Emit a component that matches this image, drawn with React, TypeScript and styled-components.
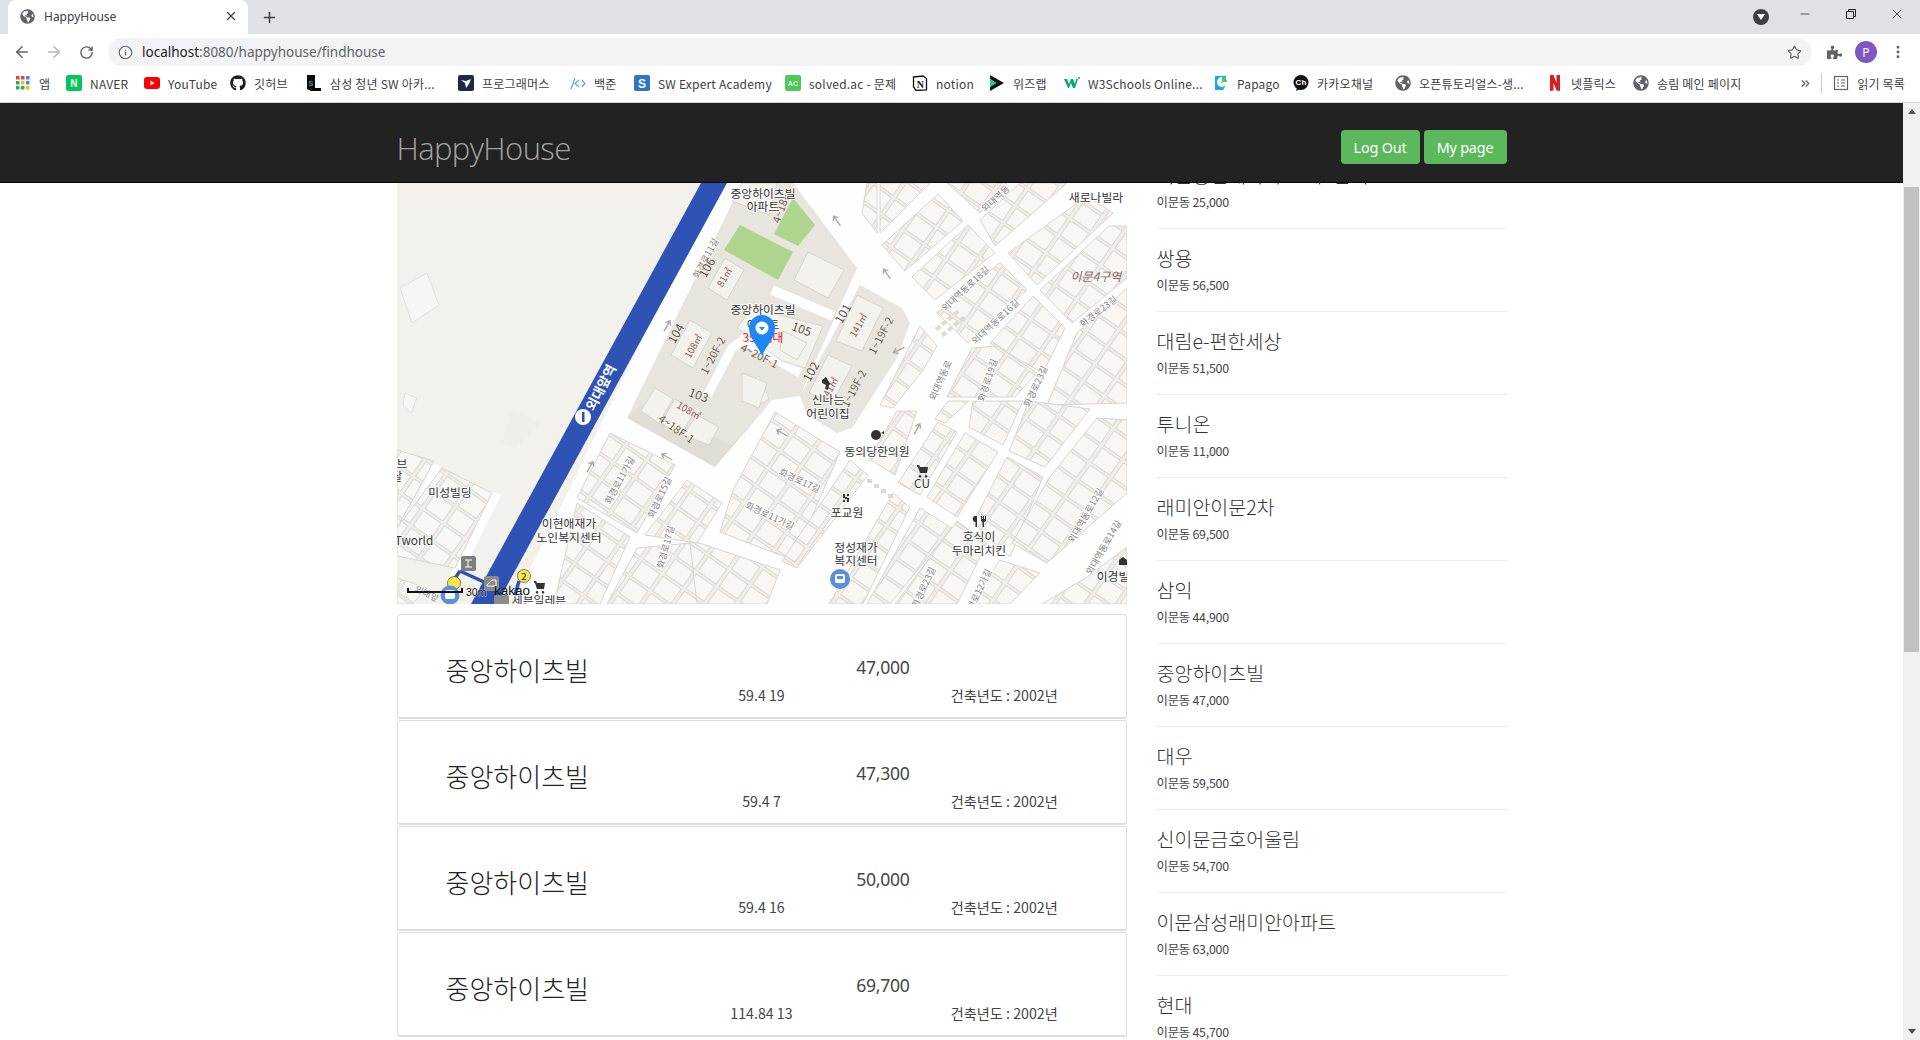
import React from "react";
import styled, { createGlobalStyle } from "styled-components";
import { ArrowLeft, ArrowRight, RotateCw, Info, Star, X, Plus, Minus, EllipsisVertical, ChevronsRight } from "lucide-react";
import { FaGithub, FaGlobeAmericas, FaPuzzlePiece } from "react-icons/fa";

const SANS = `"Noto Sans", "Noto Sans CJK KR", sans-serif`;
const KR = `"Noto Sans CJK KR", "Noto Sans", sans-serif`;

const Global = createGlobalStyle`
  html, body { margin: 0; padding: 0; height: 1040px; overflow: hidden; background: #fff; }
  * { box-sizing: border-box; }
`;

const Screen = styled.div`
  width: 1920px; height: 1040px; display: flex; flex-direction: column; font-family: ${SANS}; overflow: hidden;
`;
const TabStrip = styled.div`
  height: 34px; background: #dee1e6; display: flex; align-items: stretch; padding-left: 8px; flex: none;
`;
const Tab = styled.div`
  width: 240px; background: #fff; border-radius: 8px 8px 0 0; display: flex; align-items: center;
  padding: 0 10px 2px 12px; font-size: 12px; color: #3c4043;
  svg { flex: none; }
`;
const TabTitle = styled.span`
  margin-left: 9px; flex: 1;
`;
const NewTab = styled.div`
  width: 42px; display: flex; align-items: center; justify-content: center; color: #3c4043;
`;
const StripSpacer = styled.div`flex: 1;`;
const MediaDot = styled.div`
  width: 16px; height: 16px; border-radius: 50%; background: #3c4043; align-self: center; margin-right: 13px;
  display: flex; align-items: center; justify-content: center;
  &::after { content: ""; border: 4px solid transparent; border-top: 6px solid #fff; border-bottom: 0; }
`;
const WinButton = styled.div`
  width: 46px; display: flex; align-items: center; justify-content: center; color: #222; padding-bottom: 6px;
`;
const Toolbar = styled.div`
  height: 32px; background: #fff; display: flex; align-items: stretch; padding: 4px 6px 0; flex: none;
`;
const ToolIcon = styled.div<{ $dim?: boolean }>`
  width: 32px; display: flex; align-items: center; justify-content: center;
  color: ${(p) => (p.$dim ? "#b6b8bb" : "#5f6368")};
`;
const Address = styled.div`
  width: 1704px; margin: 0 6px; border-radius: 14px; background: #f1f3f4; display: flex; align-items: center;
  padding: 0 10px 0 10px; color: #5f6368; font-size: 13.5px;
`;
const Url = styled.span`
  margin-left: 9px; flex: 1;
  b { font-weight: 400; color: #202124; }
`;
const Avatar = styled.div`
  width: 22px; height: 22px; border-radius: 50%; background: #7e57c2; color: #fff; font-size: 12px;
  display: flex; align-items: center; justify-content: center;
`;
const Bookmarks = styled.div`
  height: 37px; background: #fff; border-bottom: 1px solid #d4d5d7; display: flex; align-items: center;
  padding: 0 0 2px 15px; flex: none; font-family: ${KR}; font-size: 12px; letter-spacing: 0.2px; color: #3c4043;
`;
const Mark = styled.div<{ $w: number }>`
  width: ${(p) => p.$w}px; flex: none; display: flex; align-items: center; gap: 8px; white-space: nowrap; overflow: hidden;
  svg { flex: none; }
`;
const BookmarkEnd = styled.div`
  margin-left: auto; display: flex; align-items: center; color: #5f6368;
`;
const Divider = styled.div`
  width: 1px; height: 20px; background: #c9cbce; margin: 0 11px 0 9px;
`;
const ReadingLabel = styled.span`
  margin: 0 15px 0 8px; color: #3c4043;
`;
const Viewport = styled.div`
  flex: 1; display: flex; min-height: 0;
`;
const Page = styled.div`
  flex: 1; position: relative; overflow: hidden; background: #fff;
`;
const Navbar = styled.nav`
  position: absolute; z-index: 5; top: 0; left: 0; right: 0; height: 80px; background: #222; border-bottom: 1px solid #080808;
  display: flex; justify-content: center;
`;
const NavInner = styled.div`
  width: 1110px; display: flex; justify-content: space-between; align-items: flex-start;
`;
const Brand = styled.div`
  font-family: "Open Sans", ${SANS}; font-weight: 300; font-size: 31px; line-height: 42px; margin-top: 24px; color: #a3a3a3; letter-spacing: -0.6px;
`;
const NavButtons = styled.div`
  display: flex; gap: 4px; margin-top: 27px;
`;
const GreenButton = styled.div<{ $w: number }>`
  width: ${(p) => p.$w}px; height: 34px; border-radius: 4px; background: #5cb85c; color: #fff; font-size: 14.4px;
  display: flex; align-items: center; justify-content: center; letter-spacing: -0.2px;
`;
const Container = styled.div`
  width: 1140px; margin: 0 auto; display: grid; grid-template-columns: 760px 380px;
`;
const MainColumn = styled.div`
  padding: 80px 15px 0;
`;
const MapFrame = styled.div`
  height: 421px; margin-bottom: 10px; overflow: hidden; background: #f3f1ec;
  svg { display: block; }
`;
const Card = styled.div`
  height: 105px; margin-bottom: 1px; border: 1px solid #ddd; border-bottom-width: 2px; border-radius: 3px; background: #fff;
  display: grid; grid-template-columns: repeat(3, 1fr); grid-template-rows: 34px 22px; padding-top: 35px; color: #333;
  font-family: ${KR};
`;
const CardTitle = styled.div`
  grid-column: 1; grid-row: 1 / 3; align-self: start; padding-left: 48px; font-size: 26px; font-weight: 300; line-height: 40px; white-space: nowrap; color: #222;
`;
const CardPrice = styled.div`
  grid-column: 2 / 4; grid-row: 1; text-align: center; font-family: ${SANS}; font-size: 17.6px; line-height: 34px; letter-spacing: -0.3px; color: #444;
`;
const CardMeta = styled.div<{ $col: number }>`
  grid-column: ${(p) => p.$col}; grid-row: 2; text-align: center; font-size: 14.2px; line-height: 22px; color: #444;
`;
const SideColumn = styled.div`
  padding: 43px 15px 0;
`;
const SideItem = styled.div`
  height: 83px; border-bottom: 1px solid #eee; padding-top: 15px; font-family: ${KR}; color: #444;
`;
const SideTitle = styled.div`
  font-size: 19.5px; font-weight: 300; line-height: 28px; white-space: nowrap; color: #333;
`;
const SideSub = styled.div`
  font-size: 12.4px; line-height: 16px; margin-top: 5px; letter-spacing: -0.25px;
`;
const Scrollbar = styled.div`
  width: 17px; flex: none; background: #f1f1f1; display: flex; flex-direction: column; align-items: center;
`;
const ScrollArrow = styled.div<{ $down?: boolean }>`
  width: 17px; height: 17px; flex: none; display: flex; align-items: center; justify-content: center;
  &::after { content: ""; border: 4px solid transparent; ${(p) => (p.$down ? "border-top: 5px solid #505050; border-bottom: 0;" : "border-bottom: 5px solid #505050; border-top: 0;")} }
`;
const Thumb = styled.div`
  width: 15px; height: 465px; background: #c1c1c1; margin-top: 67px;
`;
const ScrollSpace = styled.div`flex: 1;`;

/* ---------- map ---------- */
const MapText = styled.text<{ $kind: "poi" | "road" | "bld" | "area" | "num" | "red" | "station" }>`
  font-family: ${KR};
  text-anchor: middle;
  dominant-baseline: central;
  paint-order: stroke;
  stroke-linejoin: round;
  ${(p) =>
    p.$kind === "poi" ? "font-size: 11.8px; fill: #333; stroke: rgba(255,255,255,.85); stroke-width: 2px;" :
    p.$kind === "road" ? "font-size: 9.2px; fill: #85827c; stroke: #fff; stroke-width: 2px;" :
    p.$kind === "bld" ? "font-size: 11px; fill: #6d5c4c; stroke: rgba(255,255,255,.5); stroke-width: 1px;" :
    p.$kind === "area" ? "font-size: 9.5px; fill: #8a5a55; stroke: none;" :
    p.$kind === "num" ? "font-size: 12px; fill: #5e4f3e; stroke: rgba(255,255,255,.5); stroke-width: 1px;" :
    p.$kind === "red" ? "font-size: 11.5px; fill: #d8141c; stroke: none;" :
    "font-size: 13.5px; fill: #fff; stroke: none; font-weight: 700;"}
`;
const ScaleText = styled.text`
  font-family: "Liberation Sans", sans-serif; font-size: 10.5px; fill: #111; paint-order: stroke; stroke: rgba(255,255,255,.6); stroke-width: 1px;
`;
const KakaoText = styled.text`
  font-family: "Liberation Sans", sans-serif; font-size: 13.5px; fill: #111;
`;

type Kind = "poi" | "road" | "bld" | "area" | "num" | "red" | "station";
const labels: [string, number, number, number, Kind][] = [
  ["화경로11길", 308, 75, -62, "road"], ["외대역동", 598, 15, -42, "road"], ["외대역동로18길", 568, 105, -43, "road"],
  ["외대역동로16길", 598, 138, -43, "road"], ["화경로23길", 701, 128, -38, "road"], ["외대역동로", 543, 197, -66, "road"],
  ["화경로19길", 590, 197, -72, "road"], ["화경로23길", 638, 203, -65, "road"], ["화경로17길", 403, 297, 25, "road"],
  ["화경로11가길", 373, 332, 25, "road"], ["외대역동로12길", 688, 332, -60, "road"], ["외대역동로14길", 706, 364, -60, "road"],
  ["화경로23길", 526, 404, -65, "road"], ["화경로12가길", 580, 410, -65, "road"], ["화경로11가길", 222, 297, -62, "road"],
  ["화경로15길", 262, 314, -65, "road"], ["화경로17길", 268, 364, -75, "road"], ["외대앞", 30, 410, 25, "road"],
  ["106", 309, 84, -60, "num"], ["104", 278, 150, -60, "num"], ["103", 302, 211, 20, "num"], ["105", 405, 145, 20, "num"],
  ["101", 445, 130, -60, "num"], ["102", 413, 188, -60, "num"],
  ["81㎡", 327, 94, -60, "area"], ["108㎡", 296, 163, -60, "area"], ["141㎡", 461, 142, -60, "area"], ["108㎡", 292, 227, 30, "area"], ["141㎡", 432, 206, -60, "area"],
  ["4~18F-1", 280, 245, 35, "bld"], ["1~20F-2", 315, 172, -62, "bld"], ["4~20F-1", 363, 172, 27, "bld"],
  ["1~19F-2", 483, 152, -62, "bld"], ["1~19F-2", 456, 205, -62, "bld"], ["4~18F", 383, 25, -70, "bld"],
  ["중앙하이츠빌", 366, 9, 0, "poi"], ["아파트", 366, 22, 0, "poi"], ["중앙하이츠빌", 366, 125, 0, "poi"], ["아파트", 366, 140, 0, "poi"],
  ["354세대", 366, 154, 0, "red"], ["신나는", 431, 215, 0, "poi"], ["어린이집", 431, 229, 0, "poi"],
  ["동의당한의원", 480, 267, 0, "poi"], ["CU", 525, 299, 0, "poi"], ["포교원", 450, 328, 0, "poi"],
  ["정성재가", 459, 363, 0, "poi"], ["복지센터", 459, 376, 0, "poi"], ["호식이", 582, 352, 0, "poi"], ["두마리치킨", 582, 366, 0, "poi"],
  ["이경빌", 716, 392, 0, "poi"], ["새로나빌라", 699, 13, 0, "poi"], ["미성빌딩", 53, 308, 0, "poi"], ["Tworld", 17, 356, 0, "poi"],
  ["브", 5, 279, 0, "poi"], ["달", 0, 292, 0, "poi"], ["이현애재가", 172, 339, 0, "poi"], ["노인복지센터", 172, 353, 0, "poi"],
  ["세븐일레븐", 142, 416, 0, "poi"], ["외대앞역", 203, 204, -63, "station"],
];

const pts = (p: number[]) => p.reduce((s, v, i) => s + (i % 2 ? "," : " ") + v, "");

const blocks: number[][] = [
  [541,11,566,38,508,88,485,62], [571,42,598,70,538,117,515,94], [603,80,630,107,571,160,540,130],
  [636,113,668,145,646,190,593,160], [583,37,623,0,670,0,598,63], [611,70,690,13,716,30,640,102],
  [643,107,712,43,730,43,730,95,675,140], [483,0,533,0,483,50], [550,0,610,0,583,30],
  [680,150,730,105,730,220,650,222], [600,163,640,190,618,214,550,214,575,165], [523,143,540,163,526,187,496,225,483,222],
  [378,229,443,269,396,377,323,349,336,307], [453,277,471,292,400,385,385,378], [496,310,513,324,466,421,432,421],
  [523,325,555,345,493,421,470,421], [541,239,560,249,523,312,501,300], [568,250,601,269,560,334,530,314],
  [610,274,646,294,613,374,576,340], [603,377,643,390,613,421,573,421], [652,295,700,235,730,237,730,310,650,380,615,360],
  [690,394,730,364,730,421,645,421], [293,357,383,387,370,421,293,421],
  [0,267,37,278,0,345], [45,285,95,310,58,385,0,373,0,345], [180,320,233,354,203,421,157,421],
  [213,250,278,282,240,350,180,315], [290,297,325,320,300,360,248,352], [240,365,293,360,300,421,210,421],
  [0,395,30,405,15,421,0,421],
  [551,218,572,218,548,240,538,236], [576,218,626,218,606,262,572,244], [632,218,693,226,648,284,612,268],
  [500,228,520,228,498,292,472,276], [470,0,480,0,480,50,465,30], [560,338,590,360,560,421,498,421],
];

const buildings: number[][] = [
  [328,75,347,87,330,117,311,105], [293,137,315,150,296,185,274,172], [411,69,447,87,431,115,397,97],
  [460,112,486,125,465,168,439,158], [431,172,455,183,435,220,412,210], [340,145,355,125,426,143,408,185,385,178],
  [258,205,276,216,262,240,244,228], [278,216,298,228,284,252,264,240], [300,232,322,244,312,262,286,252],
  [386,148,410,160,400,177,383,167], [345,190,370,200,362,225,345,218], [345,0,380,0,372,32,335,18],
];

const arrows: [number, number, number][] = [[440,38,-35],[490,91,-35],[502,167,-115],[270,143,30],[520,246,28],[385,250,-60],[193,284,30],[270,274,-60]];

const MapDrawing = () => (
  <svg width="730" height="421" viewBox="0 0 730 421">
    <defs>
      <pattern id="housesA" width="26" height="21" patternUnits="userSpaceOnUse" patternTransform="rotate(35)">
        <rect width="26" height="21" fill="#f0eee8" />
        <rect x="1.500" y="1.500" width="22" height="18" fill="#f8f7f4" stroke="#dbd8d1" strokeWidth="1" />
      </pattern>
    </defs>
    <rect width="730" height="421" fill="#fefefe" />
    <polygon points="0,0 322,0 116,421 0,421" fill="#f3f1ec" />
    <polygon points="335,10 348,18 138,421 122,421" fill="#fefefe" />
    <polygon points="25,328 30,330 0,375 0,360" fill="#fff" />
    <polygon points="36,280 44,284 8,370 0,362" fill="#fefefe" />
    <polygon points="95,308 104,312 60,400 50,398" fill="#fefefe" />
    <polygon points="3,105 30,90 42,122 15,140" fill="#f8f6f2" stroke="#e3e1da" />
    <polygon points="8,210 20,215 14,230 6,222" fill="#f8f6f2" stroke="#e3e1da" />
    <polygon points="115,225 143,240 118,265 105,260" fill="#eeefe9" />
    {blocks.map((b, i) => (
      <polygon key={i} points={pts(b)} fill="url(#housesA)" stroke="#d9d6cf" strokeWidth="1" />
    ))}
    <polygon points="345,0 396,0 460,85 403,213 375,217 318,284 230,235" fill="#e7e5de" />
    <polygon points="463,102 505,125 513,140 500,175 455,245 440,250 410,232 403,213" fill="#e7e5de" />
    <polygon points="318,284 230,235 245,222 335,262 375,217" fill="#dfddd5" />
    <polygon points="343,42 396,69 381,97 327,67" fill="#afd48d" />
    <polygon points="396,15 418,42 401,63 377,51" fill="#afd48d" />
    <polyline points="310,213 335,165 346,157 403,190" fill="none" stroke="#fff" strokeWidth="9" />
    <polyline points="375,107 436,133" fill="none" stroke="#fff" strokeWidth="10" />
    <polygon points="350,200 362,193 372,216 362,222" fill="#f4f3ee" stroke="#d8d6cf" />
    {buildings.map((b, i) => (
      <polygon key={i} points={pts(b)} fill="#f3f2ed" stroke="#d6d4cc" />
    ))}
    <polygon points="304,0 330,0 100,421 74,421" fill="#2f52b5" />
    <circle cx="186" cy="234" r="8" fill="#fff" />
    <rect x="185" y="229" width="2.500" height="10" fill="#2f52b5" />
    {[0, 1, 2, 3].map((i) => (
      <g key={i}>
        <rect x={538 + i * 6} y={145 - i * 5} width="5" height="4" fill="#dcdad2" transform={`rotate(-40 ${538 + i * 6} ${145 - i * 5})`} />
        <rect x={544 + i * 6} y={151 - i * 5} width="5" height="4" fill="#dcdad2" transform={`rotate(-40 ${544 + i * 6} ${151 - i * 5})`} />
        <rect x={470 + i * 7} y={296 + i * 5} width="5" height="4" fill="#dcdad2" />
      </g>
    ))}
    {arrows.map(([x, y, r], i) => (
      <g key={i} transform={`translate(${x} ${y}) rotate(${r})`} stroke="#a9a9a6" fill="none" strokeWidth="1.400">
        <path d="M0 6V-5M-3 -2L0 -6L3 -2" />
      </g>
    ))}
    {labels.map(([t, x, y, r, k], i) => (
      <MapText key={i} $kind={k} x={x} y={y} transform={r ? `rotate(${r} ${x} ${y})` : undefined}>{t}</MapText>
    ))}
    <text x="699" y="92" textAnchor="middle" dominantBaseline="central" fontFamily={KR} fontStyle="italic" fontSize="12" fill="#8a6d6a">이문4구역</text>

    {/* POI icons */}
    <g fill="#333">
      <path d="M137 398h2l1 2h8l-1 6h-7l-2-6h-1zM140 408a1.300 1.300 0 1 0 .1 0zM146 408a1.300 1.300 0 1 0 .1 0z" />
      <path d="M520 282h2l1 2h8l-1 6h-7l-2-6h-1zM523 292a1.300 1.300 0 1 0 .1 0zM529 292a1.300 1.300 0 1 0 .1 0z" />
      <circle cx="479" cy="252" r="5" />
      <path d="M484 250l3-2v3z" />
      <path d="M446 311h2v3h2v-3h2v2h-2v2h2v4h-2v-3h-2v3h-2v-2h2v-2h-2z" />
      <path d="M578 333h2v11h-1.500v-5a2.500 3 0 0 1 -.5-6zM584 333h1v3h1v-3h1v3h1v-3h1v4a2 2 0 0 1 -2 2v5h-1.500v-5a2 2 0 0 1 -1.500-2z" />
      <path d="M722 382v-5l4-3 4 3v5z" />
      <path d="M425 197l4-3 3 5 2 2-2 1-1 5-3-1 1-4-4-2z" />
    </g>
    <circle cx="443" cy="396" r="10" fill="#5b8fdb" />
    <rect x="438" y="391" width="10" height="9" rx="2" fill="#fff" />
    <rect x="440" y="393" width="6" height="3" fill="#5b8fdb" />

    {/* station cluster */}
    <polyline points="63,388 87,399" fill="none" stroke="#2f52b5" strokeWidth="3.500" />
    <polyline points="122,398 118,412" fill="none" stroke="#2f52b5" strokeWidth="3.500" />
    <polyline points="63,388 56,398" fill="none" stroke="#2f52b5" strokeWidth="3.500" />
    <rect x="64" y="373" width="15" height="15" rx="2" fill="#7f7f7f" />
    <rect x="87" y="393" width="15" height="15" rx="2" fill="#8b8b8b" />
    <rect x="97" y="412" width="15" height="15" rx="2" fill="#8b8b8b" />
    <path d="M68 377h7M71 377v7M68 384h7M90 402l5-5h4v6h-9z" stroke="#fff" fill="none" />
    <circle cx="57" cy="400" r="6.500" fill="#f8e84e" stroke="#333" strokeWidth=".6" />
    <circle cx="127" cy="393" r="6.500" fill="#f8e84e" stroke="#333" strokeWidth=".6" />
    <MapText $kind="area" x="127" y="393" style={{ fill: "#222" }}>2</MapText>
    <circle cx="53" cy="412" r="9.500" fill="#5b8fdb" />
    <rect x="48" y="407" width="10" height="9" rx="2" fill="#fff" />
    <path d="M11 405v4h54v-4" fill="none" stroke="#111" strokeWidth="2" />
    <ScaleText x="69" y="413">30m</ScaleText>
    <KakaoText x="97" y="412">kakao</KakaoText>

    {/* marker */}
    <path d="M365 173C361 163 352 155 352 145a13 13 0 0 1 26 0C378 155 369 163 365 173z" fill="#1f87f5" />
    <circle cx="365" cy="145" r="6.500" fill="#fff" />
    <path d="M362 144h6l-3 3.500z" fill="#1f87f5" />
  </svg>
);

/* ---------- bookmark icons ---------- */
const AppsIcon = () => (
  <svg width="16" height="16" viewBox="0 0 16 16">
    {["#ea4335", "#ea4335", "#4285f4", "#34a853", "#fbbc05", "#4285f4", "#34a853", "#34a853", "#fbbc05"].map((c, i) => (
      <rect key={i} x={1 + (i % 3) * 5} y={1 + Math.floor(i / 3) * 5} width="3.500" height="3.500" fill={c} />
    ))}
  </svg>
);
const SquareIcon = ({ bg, fg, t, size = 10, r = 2 }: { bg: string; fg: string; t: string; size?: number; r?: number }) => (
  <svg width="16" height="16" viewBox="0 0 16 16">
    <rect width="16" height="16" rx={r} fill={bg} />
    <text x="8" y="8.500" textAnchor="middle" dominantBaseline="central" fontFamily="Liberation Sans, sans-serif" fontWeight="700" fontSize={size} fill={fg}>{t}</text>
  </svg>
);
const YouTubeIcon = () => (
  <svg width="16" height="16" viewBox="0 0 16 16">
    <rect y="2" width="16" height="12" rx="3" fill="#f00" />
    <path d="M6.500 5.500l4 2.500-4 2.500z" fill="#fff" />
  </svg>
);
const SamsungIcon = () => (
  <svg width="16" height="16" viewBox="0 0 16 16">
    <path d="M1 0h8v13h6v3H5l-4-2z" fill="#0a0a0a" />
    <text x="5" y="8" textAnchor="middle" dominantBaseline="central" fontFamily="Liberation Sans, sans-serif" fontSize="7" fill="#5cc6d8">S</text>
  </svg>
);
const ProgrammersIcon = () => (
  <svg width="16" height="16" viewBox="0 0 16 16">
    <rect width="16" height="16" rx="2" fill="#1d2a3f" />
    <path d="M3 5l5 1 5-2-2 5-3 4-1-5z" fill="#fff" />
  </svg>
);
const BojIcon = () => (
  <svg width="16" height="16" viewBox="0 0 16 16" fill="none" stroke="#5aa5e0" strokeWidth="1.200">
    <path d="M5 3L1 14M9 5L5 8.500l4 3.500M12 5l3 3.500L12 12" />
  </svg>
);
const NotionIcon = () => (
  <svg width="16" height="16" viewBox="0 0 16 16">
    <path d="M1.500 2L11 1l3.500 2.500V15L4 15.500 1.500 12z" fill="#fff" stroke="#111" strokeWidth="1.300" />
    <text x="8.500" y="9.500" textAnchor="middle" dominantBaseline="central" fontFamily="Liberation Serif, serif" fontWeight="700" fontSize="10" fill="#111">N</text>
  </svg>
);
const WizlabIcon = () => (
  <svg width="16" height="16" viewBox="0 0 16 16">
    <path d="M1 0l14 8-14 8 0-4 6-4-6-4z" fill="#111" />
    <path d="M1 4l6 4-6 4z" fill="#1cc8a5" />
  </svg>
);
const W3Icon = () => (
  <svg width="16" height="16" viewBox="0 0 16 16">
    <path d="M0 4h3l2 5 2-5h2l2 5 1-5h2l-3 9h-2l-2-5-2 5H4z" fill="#04aa6d" />
    <circle cx="15" cy="3" r="1" fill="#04aa6d" />
  </svg>
);
const PapagoIcon = () => (
  <svg width="16" height="16" viewBox="0 0 16 16">
    <path d="M2 1h11v9l-3 5H2z" fill="#1ca7f0" />
    <circle cx="9" cy="7" r="5" fill="#fff" />
    <path d="M9 2a5 5 0 0 1 5 5H9z" fill="#2fcf6e" />
    <circle cx="9" cy="7" r="1.500" fill="#f5b932" />
  </svg>
);
const ChIcon = () => (
  <svg width="16" height="16" viewBox="0 0 16 16">
    <circle cx="8" cy="7.500" r="7.500" fill="#111" />
    <path d="M4 13l-1 3 4-2z" fill="#111" />
    <text x="8" y="7.500" textAnchor="middle" dominantBaseline="central" fontFamily="Liberation Sans, sans-serif" fontWeight="700" fontSize="8" fill="#fff">Ch</text>
  </svg>
);
const NetflixIcon = () => (
  <svg width="16" height="16" viewBox="0 0 16 16">
    <path d="M3 0h3.500l3 8V0H13v16l-3.500-.5-3-7.500v7.500L3 16z" fill="#d81f26" />
  </svg>
);
const Globe = () => <FaGlobeAmericas size={16} color="#5f6368" />;

const marks: [React.ReactNode, string, number][] = [
  [<AppsIcon />, "앱", 51],
  [<SquareIcon bg="#03c75a" fg="#fff" t="N" />, "NAVER", 78],
  [<YouTubeIcon />, "YouTube", 86],
  [<FaGithub size={16} color="#1b1f23" />, "깃허브", 76],
  [<SamsungIcon />, "삼성 청년 SW 아카...", 152],
  [<ProgrammersIcon />, "프로그래머스", 112],
  [<BojIcon />, "백준", 64],
  [<SquareIcon bg="#2f74c9" fg="#fff" t="S" size={12} />, "SW Expert Academy", 151],
  [<SquareIcon bg="#50c75a" fg="#dff7df" t="AC" size={7} />, "solved.ac - 문제", 127],
  [<NotionIcon />, "notion", 77],
  [<WizlabIcon />, "위즈랩", 75],
  [<W3Icon />, "W3Schools Online...", 149],
  [<PapagoIcon />, "Papago", 80],
  [<ChIcon />, "카카오채널", 102],
  [<Globe />, "오픈튜토리얼스-생...", 152],
  [<NetflixIcon />, "넷플릭스", 86],
  [<Globe />, "송림 메인 페이지", 130],
];

const houses: [string, string, string, string][] = [
  ["중앙하이츠빌", "47,000", "59.4 19", "건축년도 : 2002년"],
  ["중앙하이츠빌", "47,300", "59.4 7", "건축년도 : 2002년"],
  ["중앙하이츠빌", "50,000", "59.4 16", "건축년도 : 2002년"],
  ["중앙하이츠빌", "69,700", "114.84 13", "건축년도 : 2002년"],
];

const aptList: [string, string][] = [
  ["이문동현대아파트 제1단지", "이문동 25,000"],
  ["쌍용", "이문동 56,500"],
  ["대림e-편한세상", "이문동 51,500"],
  ["투니온", "이문동 11,000"],
  ["래미안이문2차", "이문동 69,500"],
  ["삼익", "이문동 44,900"],
  ["중앙하이츠빌", "이문동 47,000"],
  ["대우", "이문동 59,500"],
  ["신이문금호어울림", "이문동 54,700"],
  ["이문삼성래미안아파트", "이문동 63,000"],
  ["현대", "이문동 45,700"],
];

const RestoreIcon = () => (
  <svg width="12" height="12" viewBox="0 0 12 12" fill="none" stroke="currentColor" strokeWidth="1">
    <path d="M1.500 3.500h7v7h-7zM3.500 3.500v-2h7v7h-2" />
  </svg>
);
const ReadingIcon = () => (
  <svg width="16" height="16" viewBox="0 0 16 16" fill="none" stroke="#5f6368" strokeWidth="1.200">
    <rect x="1.500" y="1.500" width="13" height="13" />
    <path d="M4 5h2M8 5h4M4 8h2M8 8h4M4 11h2M8 11h4" />
  </svg>
);

export default function App() {
  return (
    <Screen>
      <Global />
      <TabStrip>
        <Tab>
          <FaGlobeAmericas size={15} color="#5f6368" />
          <TabTitle>HappyHouse</TabTitle>
          <X size={14} color="#3c4043" strokeWidth={2.2} />
        </Tab>
        <NewTab><Plus size={17} strokeWidth={2.2} /></NewTab>
        <StripSpacer />
        <MediaDot />
        <WinButton><Minus size={14} strokeWidth={1.2} /></WinButton>
        <WinButton><RestoreIcon /></WinButton>
        <WinButton><X size={16} strokeWidth={1.1} /></WinButton>
      </TabStrip>
      <Toolbar>
        <ToolIcon><ArrowLeft size={18} strokeWidth={2.1} /></ToolIcon>
        <ToolIcon $dim><ArrowRight size={18} strokeWidth={2.1} /></ToolIcon>
        <ToolIcon><RotateCw size={15} strokeWidth={2.2} /></ToolIcon>
        <Address>
          <Info size={15} strokeWidth={1.8} />
          <Url><b>localhost</b>:8080/happyhouse/findhouse</Url>
          <Star size={15} strokeWidth={1.8} />
        </Address>
        <ToolIcon><FaPuzzlePiece size={15} /></ToolIcon>
        <ToolIcon><Avatar>P</Avatar></ToolIcon>
        <ToolIcon><EllipsisVertical size={16} strokeWidth={2.4} /></ToolIcon>
      </Toolbar>
      <Bookmarks>
        {marks.map(([icon, text, w], i) => (
          <Mark key={i} $w={w}>{icon}<span>{text}</span></Mark>
        ))}
        <BookmarkEnd>
          <ChevronsRight size={13} strokeWidth={2.2} />
          <Divider />
          <ReadingIcon />
          <ReadingLabel>읽기 목록</ReadingLabel>
        </BookmarkEnd>
      </Bookmarks>
      <Viewport>
        <Page>
          <Navbar>
            <NavInner>
              <Brand>HappyHouse</Brand>
              <NavButtons>
                <GreenButton $w={79}>Log Out</GreenButton>
                <GreenButton $w={83}>My page</GreenButton>
              </NavButtons>
            </NavInner>
          </Navbar>
          <Container>
            <MainColumn>
              <MapFrame><MapDrawing /></MapFrame>
              {houses.map(([name, price, area, year], i) => (
                <Card key={i}>
                  <CardTitle>{name}</CardTitle>
                  <CardPrice>{price}</CardPrice>
                  <CardMeta $col={2}>{area}</CardMeta>
                  <CardMeta $col={3}>{year}</CardMeta>
                </Card>
              ))}
            </MainColumn>
            <SideColumn>
              {aptList.map(([t, s], i) => (
                <SideItem key={i}>
                  <SideTitle>{t}</SideTitle>
                  <SideSub>{s}</SideSub>
                </SideItem>
              ))}
            </SideColumn>
          </Container>
        </Page>
        <Scrollbar>
          <ScrollArrow />
          <Thumb />
          <ScrollSpace />
          <ScrollArrow $down />
        </Scrollbar>
      </Viewport>
    </Screen>
  );
}
